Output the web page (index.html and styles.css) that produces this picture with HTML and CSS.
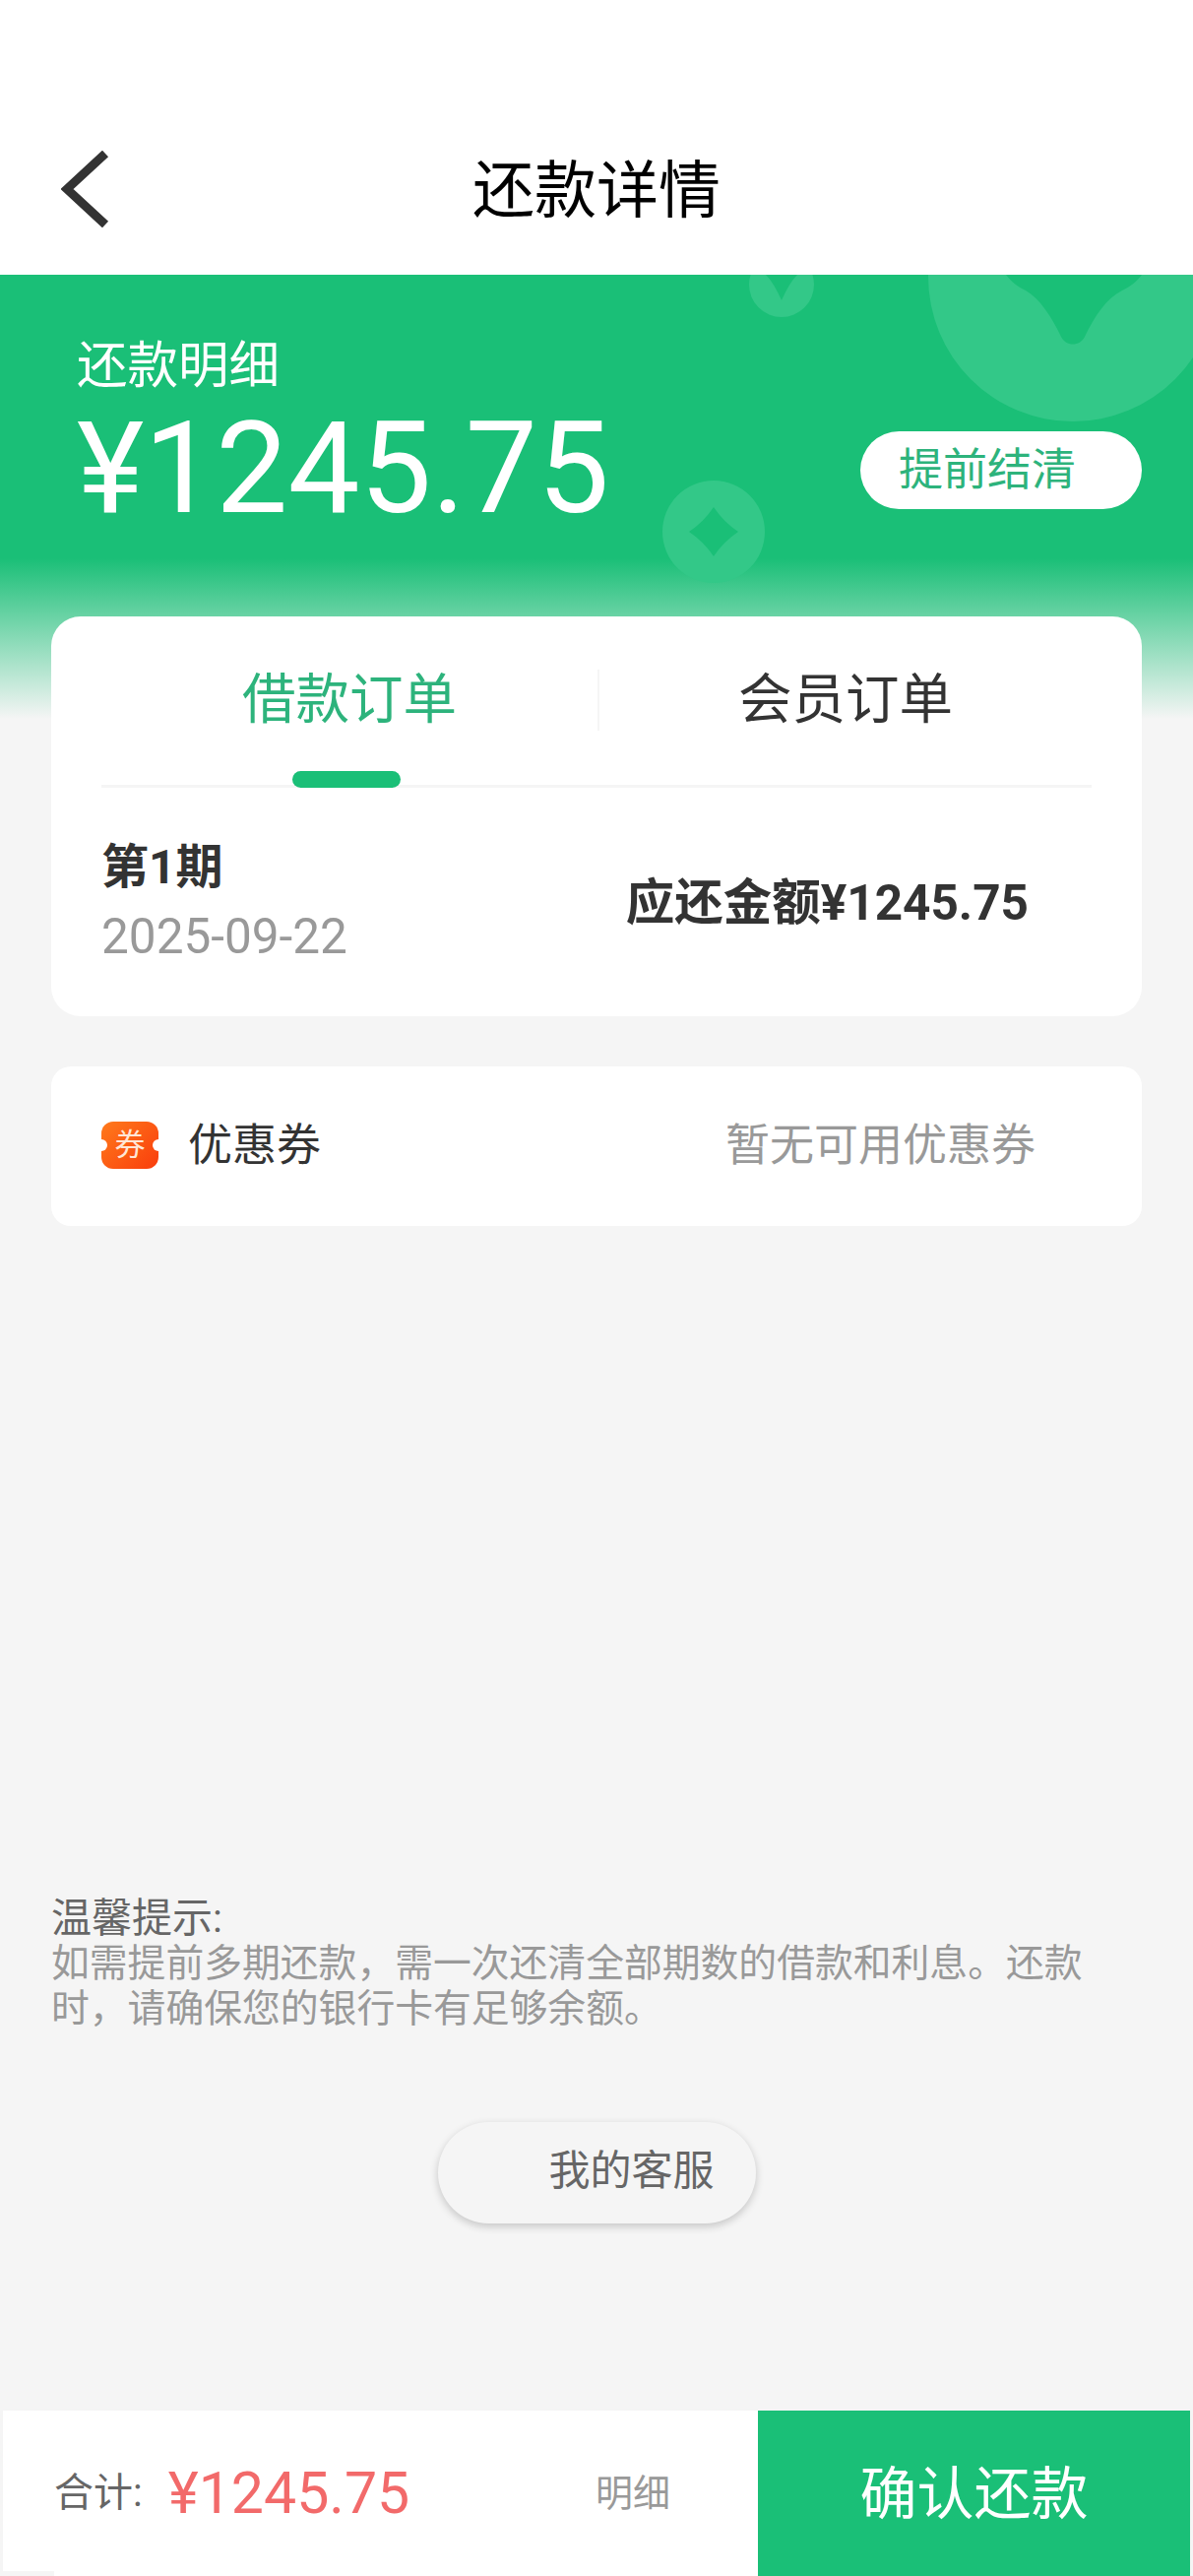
FILE: index.html
```html
<!DOCTYPE html>
<html lang="zh-CN">
<head>
  <meta charset="UTF-8" />
  <meta name="viewport" content="width=device-width, initial-scale=1.0"/>
  <title>还款详情</title>
  <link rel="stylesheet" href="styles.css">
</head>
<body>

  <div class="page">
    <header class="topbar">
      <svg class="back" width="50" height="78" viewBox="0 0 50 78">
        <polyline points="45,3 6,39 45,75" fill="none" stroke="#333" stroke-width="9"/>
      </svg>
      <h1 class="title">还款详情</h1>
    </header>

    <section class="hero">
      <!-- Coin decoration -->
      <svg class="coins" width="1212" height="451" viewBox="0 0 1212 451">
        <g fill="#33c888" fill-rule="evenodd">
          <path d="M943 2a147 147 0 1 0 294 0a147 147 0 1 0 -294 0ZM1022 0C1028 8 1034 12 1042 16C1056 24 1068 42 1078 63C1083 73 1097 73 1102 63C1112 42 1124 24 1140 16C1148 12 1154 8 1160 0Z"/>
          <path d="M761 10a33 33 0 1 0 66 0a33 33 0 1 0 -66 0ZM778 0Q786 8 794 26Q802 8 810 0Z"/>
          <path d="M673 261a52 52 0 1 0 104 0a52 52 0 1 0 -104 0ZM725 236Q735 251 750 261Q735 271 725 286Q715 271 700 261Q715 251 725 236Z"/>
        </g>
      </svg>
      <div class="hero-info">
        <div class="hero-label">还款明细</div>
        <div class="hero-amount">¥1245.75</div>
      </div>
      <button class="settle">提前结清</button>
    </section>

    <main class="content">
      <section class="order-card">
        <div class="tabs">
          <div class="tab active">
            <span class="tab-label">借款订单</span>
            <span class="tab-bar"></span>
          </div>
          <span class="tab-split"></span>
          <div class="tab">
            <span class="tab-label">会员订单</span>
          </div>
        </div>
        <div class="period">
          <div>
            <div class="period-name">第1期</div>
            <div class="period-date">2025-09-22</div>
          </div>
          <div class="period-due">应还金额¥1245.75</div>
        </div>
      </section>

      <section class="coupon">
        <span class="coupon-icon">券</span>
        <span class="coupon-name">优惠券</span>
        <span class="coupon-state">暂无可用优惠券</span>
      </section>

      <section class="tips">
        <div class="tips-title">温馨提示:</div>
        <p class="tips-text">如需提前多期还款，需一次还清全部期数的借款和利息。还款时，请确保您的银行卡有足够余额。</p>
      </section>

      <div class="service">我的客服</div>
    </main>

    <footer class="footer">
      <div class="total">
        <span class="total-label">合计:</span>
        <span class="total-amount">¥1245.75</span>
        <span class="total-detail">明细</span>
      </div>
      <button class="confirm">确认还款</button>
    </footer>
  </div>

</body>
</html>
```

FILE: styles.css
```css
* {
  box-sizing: border-box;
}

body {
  margin: 0;
  background: #f5f5f5;
  font-family: Roboto, "Noto Sans CJK SC", sans-serif;
}

button {
  border: none;
  padding: 0;
  font-family: inherit;
}

.page {
  width: 1212px;
  height: 2616px;
  display: flex;
  flex-direction: column;
  overflow: hidden;
}

/* Top bar */
.topbar {
  position: relative;
  height: 279px;
  flex: none;
  background: #fff;
  padding-top: 156px;
  text-align: center;
}

.back {
  position: absolute;
  left: 62px;
  top: 153px;
}

.title {
  margin: 0;
  font-size: 63px;
  line-height: 76px;
  font-weight: 400;
  color: #000;
}

/* Green header */
.hero {
  position: relative;
  height: 451px;
  flex: none;
  padding: 63px 52px 0 78px;
  display: flex;
  justify-content: space-between;
  align-items: flex-start;
  background: linear-gradient(180deg, #1abf77 0, #1abf77 288px, #f5f5f5 451px);
}

.coins {
  position: absolute;
  left: 0;
  top: 0;
}

.hero-info {
  position: relative;
  color: #fff;
}

.hero-label {
  font-size: 51.5px;
  line-height: 60px;
}

.hero-amount {
  font-size: 130px;
  line-height: 130px;
  margin-top: 9px;
}

.settle {
  position: relative;
  width: 286px;
  height: 79px;
  margin-top: 96px;
  padding-left: 39px;
  border-radius: 40px;
  background: #fff;
  color: #2db37c;
  font-size: 45px;
  line-height: 79px;
  text-align: left;
}

/* Content */
.content {
  position: relative;
  flex: 1;
  margin-top: -104px;
  padding: 0 52px;
}

.order-card {
  height: 406px;
  background: #fff;
  border-radius: 30px;
}

.tabs {
  height: 174px;
  margin: 0 51px;
  display: flex;
  align-items: flex-start;
  border-bottom: 3px solid #f5f5f5;
}

.tab {
  flex: none;
  width: 500px;
  height: 174px;
  padding-top: 52px;
  display: flex;
  flex-direction: column;
  align-items: center;
  color: #333;
}

.tab.active {
  width: 504px;
  color: #2db37c;
}

.tab-label {
  font-size: 54.5px;
  line-height: 64px;
}

.tab-bar {
  width: 110px;
  height: 17px;
  margin: 41px 7px 0 0;
  background: #1abf77;
  border-radius: 9px;
}

.tab-split {
  flex: none;
  width: 2px;
  height: 62px;
  margin-top: 54px;
  background: #f5f5f5;
}

.period {
  height: 232px;
  padding: 0 115px 0 51px;
  display: flex;
  justify-content: space-between;
  align-items: center;
}

.period-name {
  font-size: 48px;
  line-height: 60px;
  font-weight: 700;
  color: #333;
}

.period-date {
  font-size: 49.5px;
  line-height: 60px;
  margin-top: 10px;
  color: #999;
}

.period-due {
  margin-bottom: 8px;
  font-size: 49.5px;
  font-weight: 700;
  color: #333;
}

.coupon {
  height: 162px;
  margin-top: 51px;
  padding: 0 108px 0 51px;
  display: flex;
  align-items: center;
  background: #fff;
  border-radius: 20px;
}

.coupon-icon {
  position: relative;
  width: 58px;
  height: 48px;
  margin-bottom: 2px;
  overflow: hidden;
  border-radius: 12px;
  background: linear-gradient(135deg, #ff7a1c, #f93d0c);
  color: #ffe6d6;
  font-size: 31px;
  line-height: 48px;
  text-align: center;
}

.coupon-icon::before,
.coupon-icon::after {
  content: "";
  position: absolute;
  top: 18px;
  width: 12px;
  height: 12px;
  border-radius: 50%;
  background: #fff;
}

.coupon-icon::before {
  left: -6px;
}

.coupon-icon::after {
  right: -6px;
}

.coupon-name {
  margin: 0 0 10px 30px;
  font-size: 45px;
  color: #333;
}

.coupon-state {
  margin: 0 0 10px auto;
  font-size: 45px;
  color: #999;
}

.tips {
  margin-top: 680px;
  padding-right: 50px;
  font-size: 38.8px;
  line-height: 46px;
}

.tips-title {
  font-size: 41px;
  color: #666;
}

.tips-text {
  margin: 0;
  color: #999;
}

.service {
  width: 323px;
  height: 103px;
  margin: 92px auto 0;
  padding-right: 42px;
  border-radius: 52px;
  background: #f5f5f5;
  box-shadow: 0 3px 8px rgba(0, 0, 0, 0.2);
  color: #666;
  font-size: 42px;
  line-height: 100px;
  text-align: right;
}

/* Bottom bar */
.footer {
  position: relative;
  height: 171px;
  flex: none;
  display: flex;
  border: 3px solid #f5f5f5;
  border-bottom: none;
  background: #fff;
}

.footer::after {
  content: "";
  position: absolute;
  left: -3px;
  bottom: 0;
  width: 55px;
  height: 5px;
  background: #f5f5f5;
}

.total {
  flex: 1;
  padding: 0 0 8px 52px;
  display: flex;
  align-items: center;
}

.total-label {
  font-size: 40px;
  color: #666;
}

.total-amount {
  margin: 6px 0 0 26px;
  font-size: 59px;
  color: #f26a6a;
}

.total-detail {
  margin-left: auto;
  margin-right: 89px;
  font-size: 38px;
  color: #999;
}

.confirm {
  width: 439px;
  padding-bottom: 8px;
  background: #1abf77;
  color: #fff;
  font-size: 58px;
}
```
